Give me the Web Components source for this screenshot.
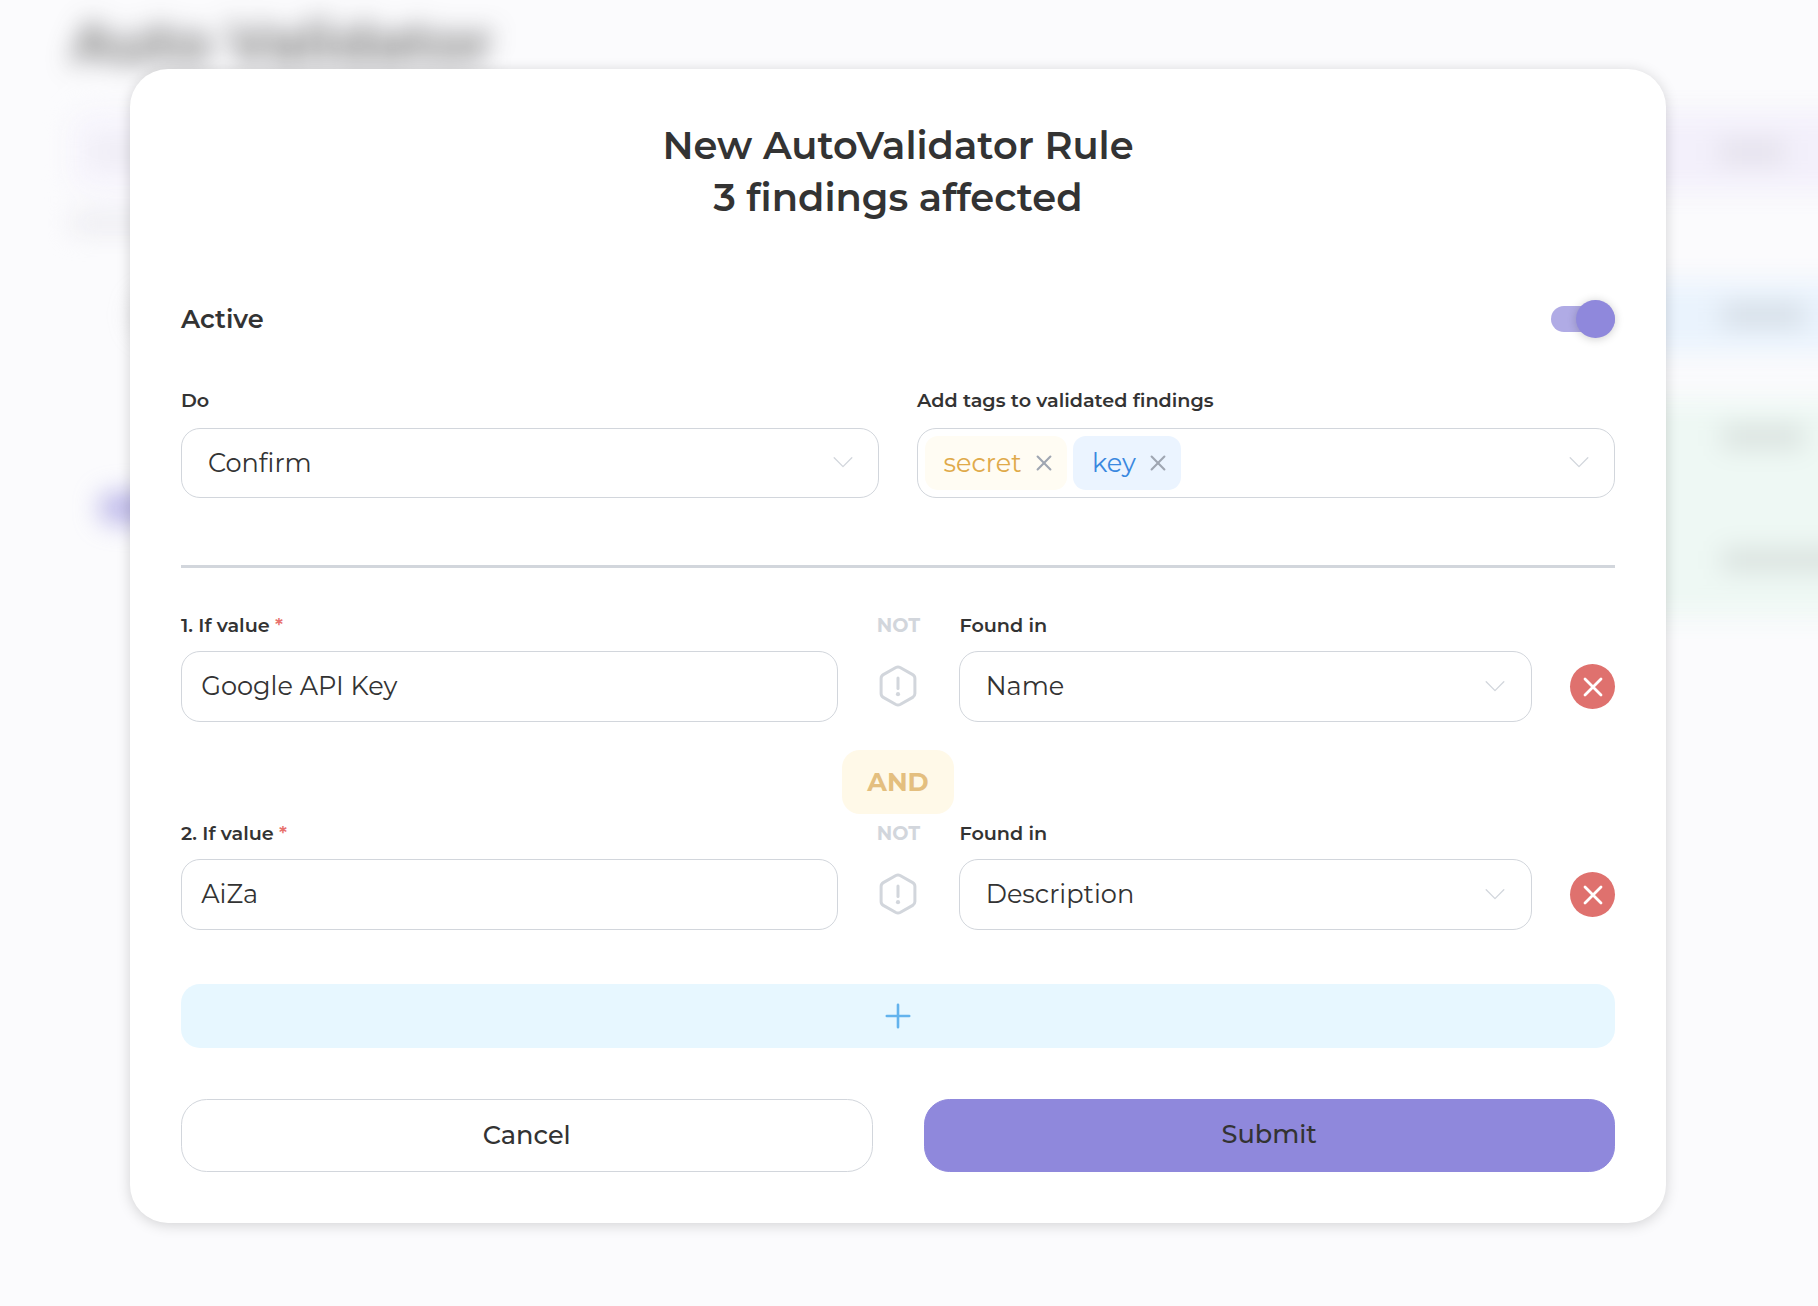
<!DOCTYPE html>
<html lang="en">
<head>
<meta charset="utf-8">
<title>Auto Validator</title>
<style>
html,body{margin:0;height:100%;overflow:hidden;background:#fbfbfd}
body{font-family:Montserrat,Inter,"Open Sans",sans-serif;font-size:25.6px;color:#333}
</style>
</head>
<body>
<av-page>
  <av-backdrop></av-backdrop>
  <av-modal slot="overlay">
    <av-heading slot="heading"><span>New AutoValidator Rule</span><span>3 findings affected</span></av-heading>
    <av-active-row>Active</av-active-row>
    <av-columns>
      <av-field>
        <span slot="label">Do</span>
        <av-select>Confirm</av-select>
      </av-field>
      <av-field>
        <span slot="label">Add tags to validated findings</span>
        <av-select tags>
          <av-tag tone="yellow">secret</av-tag>
          <av-tag tone="blue">key</av-tag>
        </av-select>
      </av-field>
    </av-columns>
    <av-divider></av-divider>
    <av-rule>
      <span slot="value-label">1. If value</span>
      <span slot="value">Google API Key</span>
      <span slot="found">Name</span>
    </av-rule>
    <av-operator>AND</av-operator>
    <av-rule>
      <span slot="value-label">2. If value</span>
      <span slot="value">AiZa</span>
      <span slot="found">Description</span>
    </av-rule>
    <av-add></av-add>
    <av-actions>
      <av-button>Cancel</av-button>
      <av-button primary>Submit</av-button>
    </av-actions>
  </av-modal>
</av-page>
<script>
const define = (name, html) => customElements.define(name, class extends HTMLElement {
  constructor(){ super(); this.attachShadow({mode:'open'}).innerHTML = html; }
});

define('av-page', `<style>
  :host{display:block;position:relative;width:1818px;height:1306px;overflow:hidden;background:#fbfbfd}
  .over{position:absolute;inset:0;padding:69px 0 0 130px}
  </style><slot></slot><div class="over"><slot name="overlay"></slot></div>`);

define('av-backdrop', `<style>
  :host{display:block;padding:13px 0 0 71px;filter:blur(12.8px);width:1800px}
  h1{margin:0;height:60px;line-height:60px;font-size:56px;font-weight:700;color:#333;opacity:.62}
  .row{display:flex;align-items:center;justify-content:space-between;box-sizing:border-box}
  .head{height:80px;margin-top:39px;background:linear-gradient(90deg,#f6f4fc,#f3f0fb 50%);border-radius:20px;padding:0 86px 0 20px}
  .note{width:150px;height:16px;margin-top:23px;background:#e9e8ee}
  .blue{height:72px;margin-top:50px;background:linear-gradient(90deg,transparent 50%,#eaf3fd 50%);padding:0 67px 4px 62px}
  .green{height:218px;margin-top:46px;background:linear-gradient(90deg,transparent 50%,#eef8f4 50%);padding:27px 0 0 28px;align-items:flex-start}
  i{display:block;height:22px;background:#777;opacity:.18}
  .dot{width:44px;height:44px;border-radius:50%;background:#aaa;opacity:.3}
  .sw{width:120px;height:30px;border-radius:15px;background:#8f88dc;opacity:.62;margin-top:67px}
  .col{display:flex;flex-direction:column;gap:101px;width:149px}
  </style>
  <h1>Auto Validator</h1>
  <div class="row head"><i style="width:60px;opacity:.06"></i><i style="width:66px;opacity:.12"></i></div>
  <div class="note"></div>
  <div class="row blue"><div class="dot"></div><i style="width:82px"></i></div>
  <div class="row green"><div class="sw"></div><div class="col"><i style="width:82px"></i><i style="width:140px"></i></div></div>`);

define('av-modal', `<style>
  :host{display:flex;flex-direction:column;box-sizing:border-box;width:1536px;height:1154px;padding:51px 51px 51px;background:#fff;border-radius:38px;
    box-shadow:0 2px 14px rgba(0,0,0,.17)}
  </style><slot name="heading"></slot><slot></slot>`);

define('av-heading', `<style>
  :host{display:flex;flex-direction:column;align-items:center;line-height:52px;height:104px;margin-bottom:76px;font-size:38.4px;font-weight:600}
  </style><slot></slot>`);

define('av-active-row', `<style>
  :host{display:flex;align-items:center;justify-content:space-between;height:38px;margin-bottom:52px;font-weight:600}
  .t{padding-bottom:2px}
  .track{display:flex;align-items:center;justify-content:flex-end;width:64px;height:26px;border-radius:13px;background:#b0abe5}
  .knob{flex:none;width:39px;height:38.4px;border-radius:50%;background:#8f88dc;box-shadow:0 1px 10px rgba(0,0,0,.2)}
  </style><span class="t"><slot></slot></span><div class="track"><div class="knob"></div></div>`);

define('av-columns', `<style>:host{display:grid;grid-template-columns:1fr 1fr;gap:38px;height:108px}</style><slot></slot>`);

define('av-field', `<style>
  :host{display:flex;flex-direction:column;gap:17px;min-width:0}
  .label{display:flex;height:21px;align-items:center;font-size:19.2px;line-height:21px;font-weight:600}
  </style><div class="label"><slot name="label"></slot></div><slot></slot>`);

define('av-select', `<style>
  :host{display:flex;align-items:center;box-sizing:border-box;height:var(--h,70px);border:1.3px solid #d2d6dc;border-radius:19px;padding:0 25.5px 0 25.9px}
  :host([tags]){padding-left:7px}
  .t{padding-bottom:2px}
  :host([tags]) .t{display:flex;gap:6px;padding:0}
  svg{margin-left:auto;flex:none}
  </style><span class="t"><slot></slot></span><svg width="20" height="12" viewBox="0 0 20 12" fill="none" stroke="#d2d6dc" stroke-width="1.3" stroke-linecap="round" stroke-linejoin="round"><path d="M1.2 .8 10 9.6 18.8.8"/></svg>`);

define('av-tag', `<style>
  :host{display:flex;align-items:center;justify-content:space-between;box-sizing:border-box;height:54px;border-radius:13px;padding:0 14.5px 0 18.5px}
  :host([tone=yellow]){background:#fffcf3;color:#dfaa4a;width:141.5px}
  :host([tone=blue]){background:#ebf4ff;color:#3a88e0;width:108px;padding-left:19.5px}
  .t{padding-bottom:2px}
  svg{margin-top:-1px}
  </style><span class="t"><slot></slot></span><svg width="16" height="16" viewBox="0 0 16 16" fill="none" stroke="#9fa6b2" stroke-width="2.1" stroke-linecap="round"><path d="M1.6 1.6 14.4 14.4M14.4 1.6 1.6 14.4"/></svg>`);

define('av-divider', `<style>:host{display:block;height:3px;margin:67px 0 47px;background:#d2d6dc}</style>`);

define('av-rule', `<style>
  :host{display:grid;grid-template-columns:657px 44.5px 573px 45px;column-gap:38.2px;grid-template-rows:20px 71px;row-gap:16px;height:107px;align-items:center}
  .label{display:flex;align-items:center;height:20px;gap:5.3px;font-size:19.2px;font-weight:600}
  .req{color:#e8716d}
  .found{padding-left:.6px}
  .not{color:#d2d6dc;justify-content:center;font-weight:700}
  .input{display:flex;align-items:center;box-sizing:border-box;height:71px;border:1.3px solid #d2d6dc;border-radius:19px;padding:0 0 2px 19.2px}
  av-select{--h:71px}
  .x{display:grid;place-items:center;width:45px;height:45px;border-radius:50%;background:#df716e}
  .icon{display:grid;place-items:center;padding-bottom:1px}
  </style>
  <div class="label"><slot name="value-label"></slot><span class="req">*</span></div>
  <div class="label not">NOT</div>
  <div class="label found">Found in</div>
  <div></div>
  <div class="input"><slot name="value"></slot></div>
  <div class="icon"><svg width="38" height="42" viewBox="0 0 38 42" fill="none" stroke="#d2d6dc" stroke-width="3" stroke-linecap="round" stroke-linejoin="round">
    <path d="M16.9 2.5Q19 1.4 21.1 2.5L33.7 9.6Q35.9 10.9 35.9 13.4V28.6Q35.9 31.1 33.7 32.4L21.1 39.5Q19 40.6 16.9 39.5L4.3 32.4Q2.1 31.1 2.1 28.6V13.4Q2.1 10.9 4.3 9.6Z"/>
    <path d="M19 13V23.5"/><circle cx="19" cy="29.2" r="2.1" fill="#d2d6dc" stroke="none"/></svg></div>
  <av-select><slot name="found"></slot></av-select>
  <div class="x"><svg width="20" height="20" viewBox="0 0 20 20" fill="none" stroke="#fff" stroke-width="2.8" stroke-linecap="round"><path d="M2 2 18 18M18 2 2 18"/></svg></div>`);

define('av-operator', `<style>
  :host{display:flex;align-items:center;justify-content:center;align-self:center;box-sizing:border-box;width:111.5px;height:64px;margin:28px 0 9px;padding-bottom:2px;border-radius:18px;background:#fff9e8;color:#e4bf7f;font-weight:700}
  </style><slot></slot>`);

define('av-add', `<style>
  :host{display:grid;place-items:center;height:64px;margin:54px 0 51px;border-radius:19px;background:#e7f7ff}
  </style><svg width="26" height="26" viewBox="0 0 26 26" fill="none" stroke="#63b3ed" stroke-width="2.6" stroke-linecap="round"><path d="M13 1.8V24.2M1.8 13H24.2"/></svg>`);

define('av-actions', `<style>:host{display:grid;grid-template-columns:1fr 1fr;gap:51px;height:73px}</style><slot></slot>`);

define('av-button', `<style>
  :host{display:flex;align-items:center;justify-content:center;box-sizing:border-box;border:1.3px solid #d2d6dc;border-radius:25.6px;font-weight:500;padding-bottom:2px}
  :host([primary]){background:#8f88dc;border-color:#8f88dc;padding-bottom:4px}
  </style><slot></slot>`);
</script>
</body>
</html>
